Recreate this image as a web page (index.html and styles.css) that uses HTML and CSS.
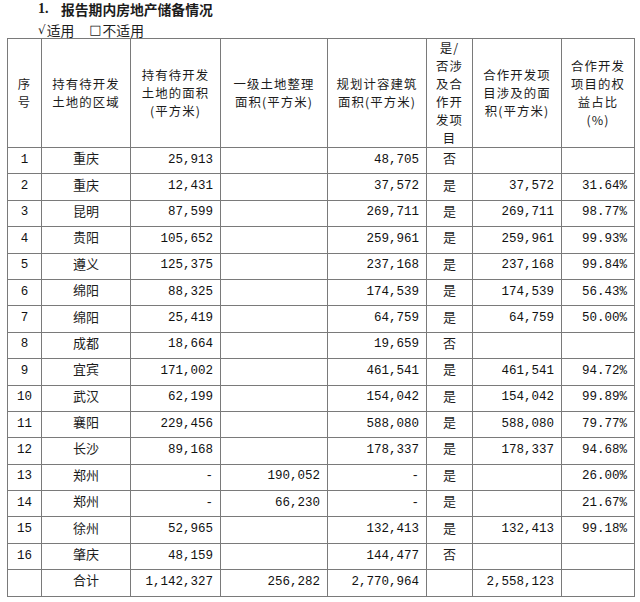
FILE: index.html
```html
<!DOCTYPE html>
<html lang="zh-CN">
<head>
<meta charset="utf-8">
<link rel="stylesheet" href="styles.css">
</head>
<body>
<div class="page">
  <h1 class="title"><span class="num-label">1.</span><span class="title-text">报告期内房地产储备情况</span></h1>
  <p class="applic"><span class="opt"><span class="mark">√</span>适用</span><span class="opt"><span class="box">□</span>不适用</span></p>
  <table class="grid">
    <colgroup>
      <col class="c1"><col class="c2"><col class="c3"><col class="c4"><col class="c5"><col class="c6"><col class="c7"><col class="c8">
    </colgroup>
    <thead>
      <tr class="head">
        <th>序<br>号</th>
        <th>持有待开发<br>土地的区域</th>
        <th>持有待开发<br>土地的面积<br>(平方米)</th>
        <th>一级土地整理<br>面积(平方米)</th>
        <th>规划计容建筑<br>面积(平方米)</th>
        <th>是/<br>否涉<br>及合<br>作开<br>发项<br>目</th>
        <th>合作开发项<br>目涉及的面<br>积(平方米)</th>
        <th>合作开发<br>项目的权<br>益占比<br>(%)</th>
      </tr>
    </thead>
    <tbody>
      <tr><td class="ctr n">1</td><td class="ctr cj">重庆</td><td class="r n">25,913</td><td class="r n"></td><td class="r n">48,705</td><td class="ctr cj">否</td><td class="r n"></td><td class="r n"></td></tr>
      <tr><td class="ctr n">2</td><td class="ctr cj">重庆</td><td class="r n">12,431</td><td class="r n"></td><td class="r n">37,572</td><td class="ctr cj">是</td><td class="r n">37,572</td><td class="r n">31.64%</td></tr>
      <tr><td class="ctr n">3</td><td class="ctr cj">昆明</td><td class="r n">87,599</td><td class="r n"></td><td class="r n">269,711</td><td class="ctr cj">是</td><td class="r n">269,711</td><td class="r n">98.77%</td></tr>
      <tr><td class="ctr n">4</td><td class="ctr cj">贵阳</td><td class="r n">105,652</td><td class="r n"></td><td class="r n">259,961</td><td class="ctr cj">是</td><td class="r n">259,961</td><td class="r n">99.93%</td></tr>
      <tr><td class="ctr n">5</td><td class="ctr cj">遵义</td><td class="r n">125,375</td><td class="r n"></td><td class="r n">237,168</td><td class="ctr cj">是</td><td class="r n">237,168</td><td class="r n">99.84%</td></tr>
      <tr><td class="ctr n">6</td><td class="ctr cj">绵阳</td><td class="r n">88,325</td><td class="r n"></td><td class="r n">174,539</td><td class="ctr cj">是</td><td class="r n">174,539</td><td class="r n">56.43%</td></tr>
      <tr><td class="ctr n">7</td><td class="ctr cj">绵阳</td><td class="r n">25,419</td><td class="r n"></td><td class="r n">64,759</td><td class="ctr cj">是</td><td class="r n">64,759</td><td class="r n">50.00%</td></tr>
      <tr><td class="ctr n">8</td><td class="ctr cj">成都</td><td class="r n">18,664</td><td class="r n"></td><td class="r n">19,659</td><td class="ctr cj">否</td><td class="r n"></td><td class="r n"></td></tr>
      <tr><td class="ctr n">9</td><td class="ctr cj">宜宾</td><td class="r n">171,002</td><td class="r n"></td><td class="r n">461,541</td><td class="ctr cj">是</td><td class="r n">461,541</td><td class="r n">94.72%</td></tr>
      <tr><td class="ctr n">10</td><td class="ctr cj">武汉</td><td class="r n">62,199</td><td class="r n"></td><td class="r n">154,042</td><td class="ctr cj">是</td><td class="r n">154,042</td><td class="r n">99.89%</td></tr>
      <tr><td class="ctr n">11</td><td class="ctr cj">襄阳</td><td class="r n">229,456</td><td class="r n"></td><td class="r n">588,080</td><td class="ctr cj">是</td><td class="r n">588,080</td><td class="r n">79.77%</td></tr>
      <tr><td class="ctr n">12</td><td class="ctr cj">长沙</td><td class="r n">89,168</td><td class="r n"></td><td class="r n">178,337</td><td class="ctr cj">是</td><td class="r n">178,337</td><td class="r n">94.68%</td></tr>
      <tr><td class="ctr n">13</td><td class="ctr cj">郑州</td><td class="r n">-</td><td class="r n">190,052</td><td class="r n">-</td><td class="ctr cj">是</td><td class="r n"></td><td class="r n">26.00%</td></tr>
      <tr><td class="ctr n">14</td><td class="ctr cj">郑州</td><td class="r n">-</td><td class="r n">66,230</td><td class="r n">-</td><td class="ctr cj">是</td><td class="r n"></td><td class="r n">21.67%</td></tr>
      <tr><td class="ctr n">15</td><td class="ctr cj">徐州</td><td class="r n">52,965</td><td class="r n"></td><td class="r n">132,413</td><td class="ctr cj">是</td><td class="r n">132,413</td><td class="r n">99.18%</td></tr>
      <tr><td class="ctr n">16</td><td class="ctr cj">肇庆</td><td class="r n">48,159</td><td class="r n"></td><td class="r n">144,477</td><td class="ctr cj">否</td><td class="r n"></td><td class="r n"></td></tr>
      <tr><td class="ctr n"></td><td class="ctr cj">合计</td><td class="r n">1,142,327</td><td class="r n">256,282</td><td class="r n">2,770,964</td><td class="ctr cj"></td><td class="r n">2,558,123</td><td class="r n"></td></tr>
    </tbody>
  </table>
</div>
</body>
</html>
```

FILE: styles.css
```css
html, body {
  margin: 0;
  padding: 0;
  background: #ffffff;
}

body {
  color: #1c1c1c;
  font-family: "Noto Sans CJK SC", sans-serif;
}

.page {
  padding: 0 0 0 7px;
  width: 627px;
}

.title {
  margin: 0;
  padding: 0 0 0 31px;
  height: 18px;
  font-size: 13.8px;
  line-height: 18px;
  font-weight: bold;
  display: flex;
  align-items: center;
}

.num-label {
  width: 23px;
  flex: none;
  font-family: "Liberation Serif", serif;
  font-size: 14px;
}

.title-text {
  font-family: "Noto Sans CJK SC", sans-serif;
}

.applic {
  margin: 3px 0 0 0;
  padding-left: 31px;
  height: 18px;
  font-size: 13.8px;
  line-height: 18px;
  display: flex;
  align-items: center;
  gap: 15px;
}

.opt {
  display: flex;
  align-items: center;
}

.mark {
  font-family: "DejaVu Sans", sans-serif;
  font-size: 12px;
  color: #111;
  margin-right: 1px;
}

.box {
  font-family: "DejaVu Sans", sans-serif;
  font-size: 13px;
  margin-right: 1px;
}

.grid {
  margin-top: -1px;
  border-collapse: collapse;
  table-layout: fixed;
  width: 627px;
  font-family: "Noto Sans CJK SC", sans-serif;
  font-size: 13.5px;
}

.c1 { width: 34px; }
.c2 { width: 89px; }
.c3 { width: 90px; }
.c4 { width: 107px; }
.c5 { width: 99px; }
.c6 { width: 46px; }
.c7 { width: 89px; }
.c8 { width: 73px; }

.grid th,
.grid td {
  border: 1px solid #7a7a7a;
  padding: 0;
  vertical-align: middle;
}

.grid th {
  font-weight: normal;
  text-align: center;
  font-size: 12.4px;
  letter-spacing: 1.1px;
  line-height: 18px;
  height: 106px;
}

.grid tbody tr {
  height: 26.4px;
}

.grid td {
  line-height: 16px;
}

.ctr {
  text-align: center;
}

.r {
  text-align: right;
  padding-right: 7px !important;
}

.n {
  font-family: "Liberation Mono", "Noto Sans CJK SC", monospace;
  font-size: 12.5px;
  color: #111;
  padding-bottom: 2px !important;
}

.cj {
  font-size: 13px;
  line-height: 16px;
  padding-bottom: 5px !important;
}
```
